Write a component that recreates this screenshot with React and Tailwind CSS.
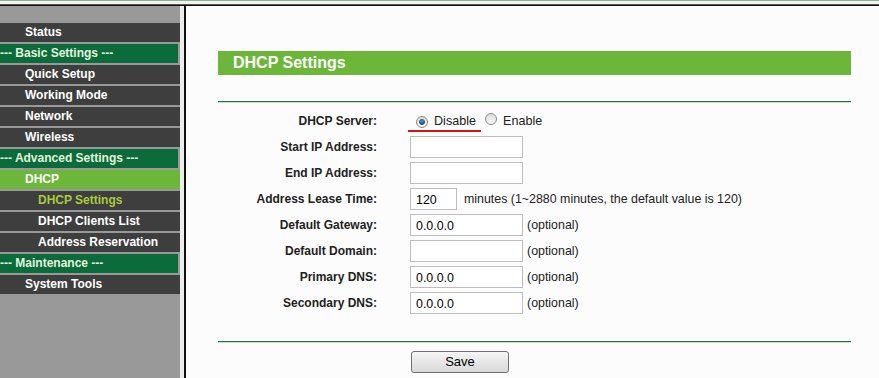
import React from "react";

const menu = [
  { label: "Status", type: "item" },
  { label: "--- Basic Settings ---", type: "head" },
  { label: "Quick Setup", type: "item" },
  { label: "Working Mode", type: "item" },
  { label: "Network", type: "item" },
  { label: "Wireless", type: "item" },
  { label: "--- Advanced Settings ---", type: "head" },
  { label: "DHCP", type: "active" },
  { label: "DHCP Settings", type: "subActive" },
  { label: "DHCP Clients List", type: "sub" },
  { label: "Address Reservation", type: "sub" },
  { label: "--- Maintenance ---", type: "head" },
  { label: "System Tools", type: "item" },
];

function MenuRow({ item }) {
  if (item.type === "head") {
    return (
      <div className="h-[19px] mb-[2px] w-[178px] bg-[#0b6b3a] text-[#e4f2dc] leading-[19px] pl-0">
        {item.label}
      </div>
    );
  }
  if (item.type === "active") {
    return (
      <div className="h-[19px] mb-[2px] w-[180px] bg-[#6cb73a] text-white leading-[19px] pl-[25px]">
        {item.label}
      </div>
    );
  }
  const sub = item.type === "sub" || item.type === "subActive";
  return (
    <div
      className={
        "h-[19px] mb-[2px] w-[180px] bg-[#3e3e3e] leading-[19px] " +
        (sub ? "pl-[38px] " : "pl-[25px] ") +
        (item.type === "subActive" ? "text-[#a9cb3f]" : "text-white")
      }
    >
      {item.label}
    </div>
  );
}

function Radio({ checked }) {
  return (
    <span className="inline-flex items-center justify-center w-[12px] h-[12px] rounded-full border border-[#8a8a8a] bg-gradient-to-b from-[#dcdcdc] to-[#f8f8f8]">
      {checked && (
        <span className="w-[6px] h-[6px] rounded-full bg-gradient-to-b from-[#5aa3d8] to-[#1d5c8f] border border-[#234a6a]" />
      )}
    </span>
  );
}

function TextBox({ value, w = "w-[113px]" }) {
  return (
    <div
      className={
        w +
        " h-[22px] border border-[#bdbdbd] bg-white pl-[5px] text-[12.4px] leading-[22px] text-black"
      }
    >
      {value}
    </div>
  );
}

function Row({ label, children }) {
  return (
    <div className="flex h-[22px] items-center">
      <div className="w-[159px] text-right font-bold text-[12px] text-[#222]">{label}</div>
      <div className="ml-[33px] flex items-center">{children}</div>
    </div>
  );
}

export default function App() {
  const optional = <span className="ml-[4px] text-[12.4px] text-[#222]">(optional)</span>;
  return (
    <div className="w-[879px] h-[378px] overflow-hidden flex flex-col bg-[#fcfcfc] font-['Liberation_Sans',Arial,sans-serif]">
      <div className="h-[1px] bg-[#84b398]" />
      <div className="h-[3px] bg-[#f3f3f3]" />
      <div className="h-[1px] bg-[#555]" />
      <div className="h-[1px] bg-[#111]" />
      <div className="flex flex-1">
        <div className="w-[180px] bg-[#999999] pt-[17px] text-[12px] font-bold">
          {menu.map((m) => (
            <MenuRow key={m.label} item={m} />
          ))}
        </div>
        <div className="w-[4px] bg-[#ececec]" />
        <div className="w-[2px] bg-[#111]" />
        <div className="flex-1 pl-[32px]">
          <div className="mt-[45px] w-[633px] h-[24px] bg-[#6cb73a] text-white font-bold text-[16px] leading-[24px] pl-[15px]">
            DHCP Settings
          </div>
          <div className="mt-[26px] w-[633px] h-[1px] bg-[#2c6a4c]" />
          <div className="w-[633px] h-[1px] bg-[#c4e0cc]" />
          <div className="mt-[7px] flex flex-col gap-[4px]">
            <Row label="DHCP Server:">
              <div className="relative flex items-center text-[12.6px] text-[#222]">
                <span className="ml-[6px]">
                  <Radio checked />
                </span>
                <span className="ml-[6px]">Disable</span>
                <span className="ml-[9px]">
                  <Radio />
                </span>
                <span className="ml-[6px]">Enable</span>
                <div className="absolute left-[-2px] top-[18px] w-[73px] h-[2px] bg-[#d0141c]" />
              </div>
            </Row>
            <Row label="Start IP Address:">
              <TextBox value="" />
            </Row>
            <Row label="End IP Address:">
              <TextBox value="" />
            </Row>
            <Row label="Address Lease Time:">
              <TextBox value="120" w="w-[47px]" />
              <span className="ml-[7px] text-[12.4px] text-[#222]">
                minutes (1~2880 minutes, the default value is 120)
              </span>
            </Row>
            <Row label="Default Gateway:">
              <TextBox value="0.0.0.0" />
              {optional}
            </Row>
            <Row label="Default Domain:">
              <TextBox value="" />
              {optional}
            </Row>
            <Row label="Primary DNS:">
              <TextBox value="0.0.0.0" />
              {optional}
            </Row>
            <Row label="Secondary DNS:">
              <TextBox value="0.0.0.0" />
              {optional}
            </Row>
          </div>
          <div className="mt-[27px] w-[633px] h-[1px] bg-[#2c6a4c]" />
          <div className="w-[633px] h-[1px] bg-[#c4e0cc]" />
          <div className="mt-[8px] ml-[193px] w-[98px] h-[22px] rounded-[3px] border border-[#707070] bg-gradient-to-b from-[#f6f6f6] to-[#d8d8d8] text-center text-[13px] leading-[20px] text-black">
            Save
          </div>
        </div>
      </div>
    </div>
  );
}
